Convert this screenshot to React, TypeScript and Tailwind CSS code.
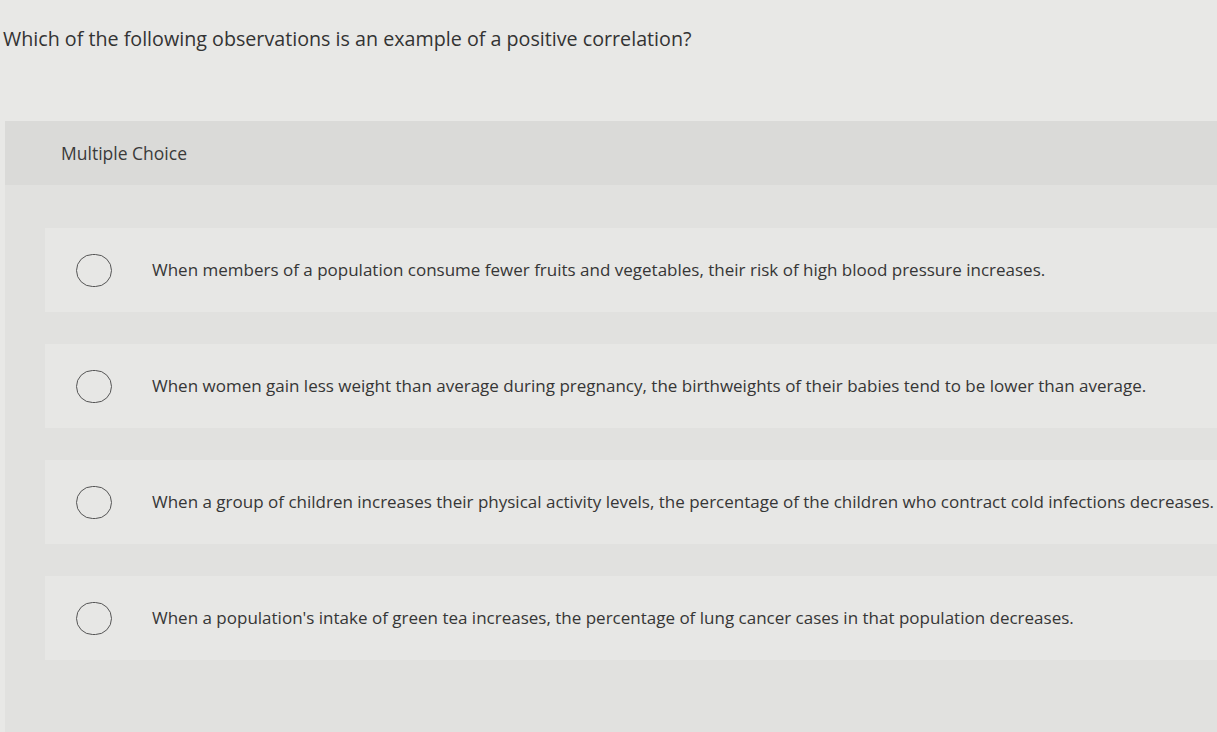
import React from "react";

const options = [
  "When members of a population consume fewer fruits and vegetables, their risk of high blood pressure increases.",
  "When women gain less weight than average during pregnancy, the birthweights of their babies tend to be lower than average.",
  "When a group of children increases their physical activity levels, the percentage of the children who contract cold infections decreases.",
  "When a population's intake of green tea increases, the percentage of lung cancer cases in that population decreases.",
];

export default function App() {
  return (
    <div
      className="w-[1217px] h-[732px] overflow-hidden bg-[#e8e8e6] flex flex-col text-[#363636]"
      style={{ fontFamily: "'Open Sans', Lato, sans-serif" }}
    >
      <div className="h-[121px] shrink-0 pt-[26px] pl-[3px]">
        <h1 className="text-[19.7px] leading-[26px] font-normal text-[#333]">
          Which of the following observations is an example of a positive correlation?
        </h1>
      </div>
      <div className="flex-1 ml-[5px] bg-[#e1e1df] flex flex-col">
        <div className="h-[64px] bg-[#dadad8] flex items-center pl-[56px] shrink-0">
          <span className="text-[17.5px] text-[#3a3a3a]">Multiple Choice</span>
        </div>
        <div className="flex flex-col gap-[32px] pt-[43px] pl-[40px]">
          {options.map((t, i) => (
            <div key={i} className="h-[84px] bg-[#e7e7e5] flex items-center">
              <div className="w-[36px] h-[33px] ml-[31px] rounded-full border-[1.5px] border-[#555] shrink-0" />
              <span className="ml-[40px] text-[17px] font-medium text-[#363636] whitespace-nowrap">{t}</span>
            </div>
          ))}
        </div>
      </div>
    </div>
  );
}
